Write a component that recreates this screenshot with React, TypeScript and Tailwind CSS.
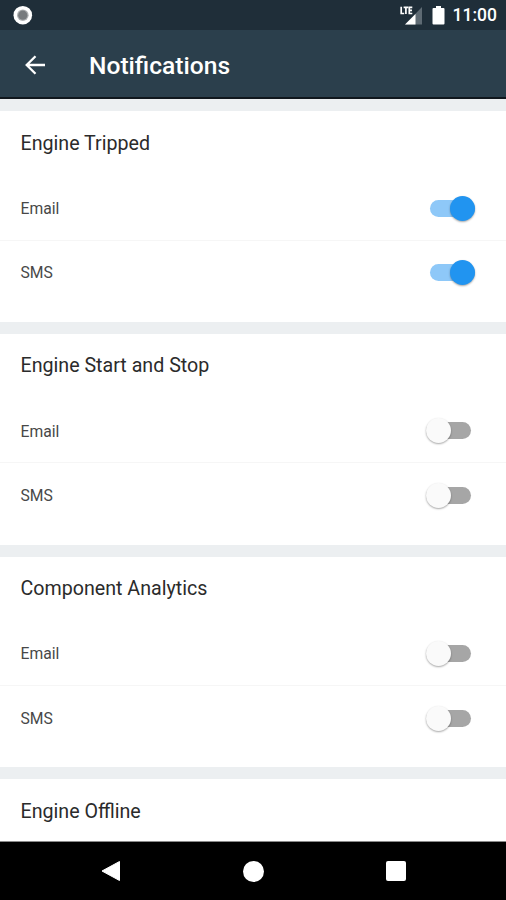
import { clsx } from "clsx";

type Channel = { label: string; on: boolean };
type Group = { title: string; channels: Channel[] };

const groups: Group[] = [
  {
    title: "Engine Tripped",
    channels: [
      { label: "Email", on: true },
      { label: "SMS", on: true },
    ],
  },
  {
    title: "Engine Start and Stop",
    channels: [
      { label: "Email", on: false },
      { label: "SMS", on: false },
    ],
  },
  {
    title: "Component Analytics",
    channels: [
      { label: "Email", on: false },
      { label: "SMS", on: false },
    ],
  },
  {
    title: "Engine Offline",
    channels: [],
  },
];

function StatusBar() {
  return (
    <div className="flex h-[30px] shrink-0 items-center justify-between bg-[#1f2e39] pr-[9px] pl-[13px] text-white">
      <svg className="size-5" viewBox="0 0 20 20">
        <circle cx="9.8" cy="10.2" r="9.3" fill="#fff" />
        <circle cx="9.8" cy="10.2" r="5.8" fill="#aeb1b3" />
        <circle cx="9.8" cy="10.2" r="4.6" fill="#777b7e" />
      </svg>
      <div className="flex items-center">
        <svg className="h-5 w-6" viewBox="0 0 24 20">
          <path d="M22 2v17.500H5z" fill="#5e6a73" />
          <path d="M15.500 8.900V19.500H5z" fill="#fff" />
          <path d="M1.200 1.700v6.800h3M3.600 2.300h4.600M5.900 2.300v6.800M12.300 2.300H9.300v6.200h3M9.300 5.400h2.700" fill="none" stroke="#fff" strokeWidth="1.700" />
        </svg>
        <svg className="ml-2 h-5 w-[13px]" viewBox="0 0 13 20">
          <path d="M4 1h5v2h2.500a1 1 0 0 1 1 1v14.500a1 1 0 0 1-1 1h-10a1 1 0 0 1-1-1V4a1 1 0 0 1 1-1H4z" fill="#fff" />
        </svg>
        <span className="ml-2 pt-0.5 text-[17.500px] leading-none font-medium">11:00</span>
      </div>
    </div>
  );
}

function Header() {
  return (
    <header className="flex h-[69px] shrink-0 items-center border-b-2 border-[#10171d] bg-[#2b3f4c] pt-0.5 pl-[25px] text-white">
      <svg className="size-5" viewBox="0 0 20 20" fill="none" stroke="#fff" strokeWidth="2.300">
        <path d="M20 10H2M10.500 1.200L1.700 10l8.800 8.800" />
      </svg>
      <h1 className="ml-11 pt-[3px] text-[24.600px] leading-8 font-medium">Notifications</h1>
    </header>
  );
}

function Toggle({ on }: { on: boolean }) {
  return (
    <button
      role="switch"
      aria-checked={on}
      className={clsx("flex h-[25px] w-[50px] items-center", on ? "justify-end pr-px" : "justify-start")}
    >
      <span
        className={clsx(
          "flex h-[17px] w-[45px] items-center rounded-full",
          on ? "justify-end bg-[#8ec8f8]" : "bg-[#a6a6a6]"
        )}
      >
        <span
          className={clsx(
            "size-[25px] shrink-0 rounded-full shadow-[0_1px_2px_rgba(0,0,0,0.35)]",
            on ? "bg-[#2194f0]" : "bg-[#fafafa]"
          )}
        />
      </span>
    </button>
  );
}

function NotificationGroup({ title, channels }: Group) {
  return (
    <section className="h-[210.800px] shrink-0 bg-white">
      <h2 className="flex h-[65.500px] items-center pb-px pl-[20.500px] text-[19.650px] text-[#2b2b2b]">{title}</h2>
      {channels.map((channel, i) => (
        <div
          key={channel.label}
          className={clsx(
            "flex h-16 items-center justify-between pr-[30px] pl-[20.500px] text-[15.700px] text-[#484848]",
            i === 0 && "border-b border-[#f6f6f6]"
          )}
        >
          <span className="pt-px">{channel.label}</span>
          <Toggle on={channel.on} />
        </div>
      ))}
    </section>
  );
}

function NavBar() {
  return (
    <nav className="flex h-[59px] shrink-0 items-center justify-between border-t border-[#8a8a8a] bg-black pr-[100px] pl-[101px]">
      <svg className="size-5" viewBox="0 0 20 20">
        <path d="M1 10L18.500 0.500v19z" fill="#fff" stroke="#fff" strokeLinejoin="round" />
      </svg>
      <span className="size-[21px] rounded-full bg-white" />
      <span className="size-5 rounded-[2px] bg-white" />
    </nav>
  );
}

export default function App() {
  return (
    <div className="flex h-[900px] w-[506px] flex-col overflow-hidden bg-[#eceff1] font-[Roboto,sans-serif]">
      <StatusBar />
      <Header />
      <main className="flex min-h-0 flex-1 flex-col gap-3 overflow-hidden pt-3">
        {groups.map((group) => (
          <NotificationGroup key={group.title} {...group} />
        ))}
      </main>
      <NavBar />
    </div>
  );
}
